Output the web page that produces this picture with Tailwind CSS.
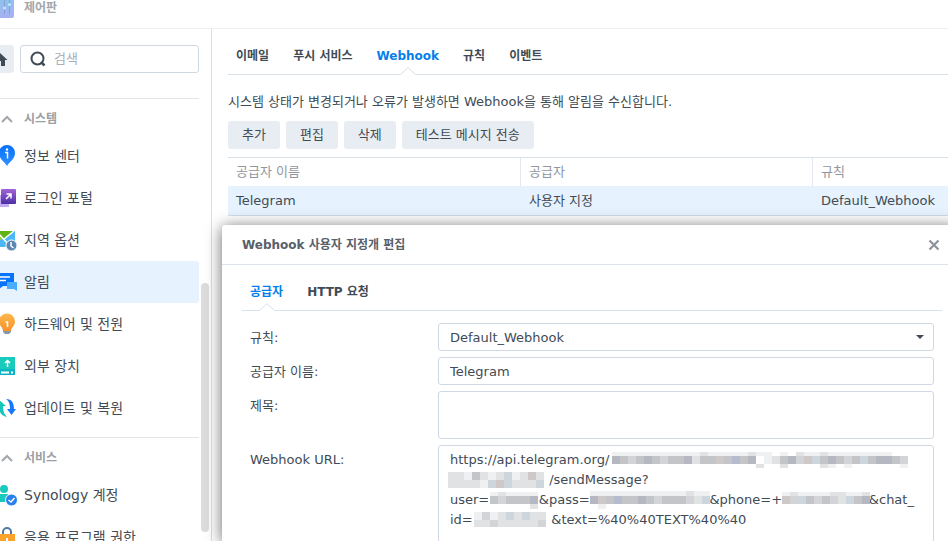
<!DOCTYPE html>
<html lang="ko">
<head>
<meta charset="utf-8">
<meta name="viewport" content="width=device-width, initial-scale=1">
<title>제어판</title>
<script src="https://cdn.jsdelivr.net/npm/@tailwindcss/browser@4"></script>
</head>
<body class="relative flex h-screen flex-col overflow-hidden bg-white font-['DejaVu_Sans','Noto_Sans_CJK_KR',sans-serif] text-[13px] leading-5 text-[#414b55]">
<header class="flex h-[29px] shrink-0 items-start border-b border-[#eceff3]">
  <svg class="h-[18px] w-6 shrink-0" viewBox="0 0 24 18" aria-hidden="true">
    <defs>
      <linearGradient id="panel" x1="0" y1="0" x2="0" y2="1"><stop offset="0" stop-color="#84c8ee"/><stop offset="1" stop-color="#a9b0f2"/></linearGradient>
      <linearGradient id="blue" x1="0" y1="0" x2="0" y2="1"><stop offset="0" stop-color="#0670f8"/><stop offset="1" stop-color="#2f92ff"/></linearGradient>
      <linearGradient id="purple" x1="0" y1="0" x2="0" y2="1"><stop offset="0" stop-color="#a163d6"/><stop offset="1" stop-color="#4b2fa5"/></linearGradient>
      <linearGradient id="orange" x1="0" y1="0" x2="0" y2="1"><stop offset="0" stop-color="#fdb84c"/><stop offset="1" stop-color="#f7912a"/></linearGradient>
    </defs>
    <path d="M-4 -6H14V16a2 2 0 0 1-2 2H-4Z" fill="url(#panel)"/>
    <path d="M4.500 0V14M9.500 0V14" stroke="#7fa2cf" stroke-width="1"/>
    <circle cx="4.500" cy="8" r="1.500" fill="#c3e6fb"/><circle cx="9.500" cy="4.500" r="1.500" fill="#c3e6fb"/>
  </svg>
  <h1 class="text-xs leading-4 font-bold text-[#a3a7ac]">제어판</h1>
</header>

<div class="flex min-h-0 flex-1">
  <aside class="relative flex w-[212px] shrink-0 flex-col overflow-hidden border-r border-[#d8dfe6] pt-4 pr-3">
    <div class="flex gap-1.5">
      <button aria-label="홈" class="h-7 w-3.5 shrink-0 rounded-r-[3px] bg-[#e8edf3]">
        <svg class="h-7 w-3.5" viewBox="0 0 14 28" aria-hidden="true"><path d="M-1 7L7.500 15H5V21H1V16H-1Z" fill="#414b55"/></svg>
      </button>
      <label class="flex h-7 flex-1 items-center gap-2 rounded-[3px] border border-[#d0d9e3] pl-[9px]">
        <svg class="size-4 shrink-0" viewBox="0 0 16 16" fill="none" stroke="#414b55" stroke-width="2" aria-hidden="true"><circle cx="7.500" cy="7.500" r="6"/><path d="M11 11L14.500 14.500" stroke-width="2.500"/></svg>
        <input type="search" placeholder="검색" aria-label="검색" class="w-full min-w-0 outline-none placeholder:text-[#a9b0b8]">
      </label>
    </div>

    <section class="mt-[25px] border-t border-[#e1e6eb]">
      <h2><button class="flex h-9 w-full items-center pt-1 text-xs font-bold text-[#9a9fa5]">
        <svg class="h-3 w-6" viewBox="0 0 24 12" fill="none" stroke="#a2a7ac" stroke-width="2" aria-hidden="true"><path d="M2 9L7 4L12 9"/></svg>시스템</button></h2>
      <nav class="text-sm">
        <a href="#" class="flex h-[42px] items-center">
          <svg class="h-6 w-6" viewBox="0 0 24 24" aria-hidden="true"><path d="M7 22C4 17-1 15-1 9a8 8 0 0 1 16 0C15 15 10 17 7 22Z" fill="url(#blue)"/><path d="M5 8.500H7.500V14.500" stroke="#fff" stroke-width="1.500" fill="none"/><circle cx="7" cy="5.500" r="1.200" fill="#fff"/></svg>정보 센터</a>
        <a href="#" class="flex h-[42px] items-center">
          <svg class="h-6 w-6" viewBox="0 0 24 24" aria-hidden="true"><path d="M-1 9H9V21H-1Z" fill="#c5aaf3"/><rect x="1" y="3" width="15" height="15" rx="1" fill="url(#purple)"/><path d="M6 13L10.500 8.500M6.500 8H11V12.500" stroke="#fff" stroke-width="1.500" fill="none"/></svg>로그인 포털</a>
        <a href="#" class="flex h-[42px] items-center">
          <svg class="h-6 w-6" viewBox="0 0 24 24" aria-hidden="true"><path d="M-1 3H15V19H-1Z" fill="#4db8f8"/><path d="M-1 3H13L4 11L-1 7Z" fill="#60b515"/><path d="M-1 13L3 10L-1 6" fill="#9bd52c"/><path d="M4 11L14 3M-1 6L9 17" stroke="#fff" stroke-width="1.600"/><circle cx="11.500" cy="17.500" r="5.500" fill="#5c87b2" stroke="#fff"/><path d="M11 14V18L13.500 20" fill="none" stroke="#fff" stroke-width="1.500"/></svg>지역 옵션</a>
        <a href="#" aria-current="page" class="flex h-[42px] items-center rounded-r-[3px] bg-[#e6f2fd]">
          <svg class="h-6 w-6" viewBox="0 0 24 24" aria-hidden="true"><path d="M-1 3H14V16H3L-1 19Z" fill="#0874fb"/><path d="M0 7H10M0 10.500H6" stroke="#fff" stroke-width="1.300"/><path d="M7 12H17V21L14 19H7Z" fill="#4aadff"/></svg>알림</a>
        <a href="#" class="flex h-[42px] items-center">
          <svg class="h-6 w-6" viewBox="0 0 24 24" aria-hidden="true"><path d="M3 18H11V20L9 22H5L3 20Z" fill="#8996a5"/><path d="M3 19C3 15-1 14-1 9.500a8 8 0 0 1 16 0C15 14 11 15 11 19Z" fill="url(#orange)"/><path d="M5.500 10H7.500V15" fill="none" stroke="#fff" stroke-width="1.500"/></svg>하드웨어 및 전원</a>
        <a href="#" class="flex h-[42px] items-center">
          <svg class="h-6 w-6" viewBox="0 0 24 24" aria-hidden="true"><path d="M-1 3H15V15H-1Z" fill="#19cbbd"/><path d="M-1 15H15V21H-1Z" fill="#0bb5c1"/><path d="M7.500 13V7M5 9L7.500 6.500L10 9" fill="none" stroke="#fff" stroke-width="1.500"/><path d="M1 18.500H9M11 18.500H13" stroke="#fff" stroke-width="2"/></svg>외부 장치</a>
        <a href="#" class="flex h-[42px] items-center">
          <svg class="h-6 w-6" viewBox="0 0 24 24" aria-hidden="true"><path d="M-1 4L6 10H3C3 15 4 18 7 21C1 20-1 16-1 10Z" fill="#16c6bc"/><path d="M6 3C12 3 14 7 14 13H16L11.500 19L7 13H10C10 8 9 5 6 3Z" fill="#1679fb"/></svg>업데이트 및 복원</a>
      </nav>
    </section>

    <section class="mt-2 border-t border-[#e1e6eb]">
      <h2><button class="flex h-9 w-full items-center pt-1 text-xs font-bold text-[#9a9fa5]">
        <svg class="h-3 w-6" viewBox="0 0 24 12" fill="none" stroke="#a2a7ac" stroke-width="2" aria-hidden="true"><path d="M2 9L7 4L12 9"/></svg>서비스</button></h2>
      <nav class="text-sm">
        <a href="#" class="flex h-[42px] items-center">
          <svg class="h-6 w-6" viewBox="0 0 24 24" aria-hidden="true"><circle cx="4" cy="6" r="4" fill="#18c9bd"/><path d="M-1 11H8V19H-1Z" fill="#18c9bd"/><circle cx="11.500" cy="17" r="6" fill="#2881ee" stroke="#fff"/><path d="M8.500 17L11 19L14.500 15" fill="none" stroke="#fff" stroke-width="1.500"/></svg>Synology 계정</a>
        <a href="#" class="flex h-[42px] items-center">
          <svg class="h-6 w-6" viewBox="0 0 24 24" aria-hidden="true"><path d="M3 11V7a4 4 0 0 1 8 0V11" fill="none" stroke="#56789f" stroke-width="2"/><path d="M-1 9H15V22H-1Z" fill="#fba22d"/><path d="M7 13V18" stroke="#fff" stroke-width="2"/></svg>응용 프로그램 권한</a>
      </nav>
    </section>
    <div class="absolute top-[254px] right-0.5 h-[249px] w-2 rounded-full bg-[#dcdcdc]"></div>
  </aside>

  <main class="min-w-0 flex-1 pl-4">
    <nav class="flex h-[46px] gap-6 border-b border-[#d8e0e8] px-2 pt-[17px] text-xs leading-5 font-bold">
      <a href="#">이메일</a>
      <a href="#">푸시 서비스</a>
      <a href="#" aria-current="page" class="relative text-[#057feb]">Webhook<svg class="absolute -bottom-px left-1/2 h-2 w-4 -translate-x-1/2" viewBox="0 0 16 8" aria-hidden="true"><path d="M0 8L1 7L8 .7L15 7L16 8Z" fill="#fff"/><path d="M.5 7.500L8 .7L15.500 7.500" fill="none" stroke="#d8e0e8"/></svg></a>
      <a href="#">규칙</a>
      <a href="#">이벤트</a>
    </nav>
    <p class="mt-[17px]">시스템 상태가 변경되거나 오류가 발생하면 Webhook을 통해 알림을 수신합니다.</p>
    <div class="mt-[9px] flex gap-1.5">
      <button class="h-7 rounded-[3px] bg-[#e8edf3] px-3.5">추가</button>
      <button class="h-7 rounded-[3px] bg-[#e8edf3] px-3.5">편집</button>
      <button class="h-7 rounded-[3px] bg-[#e8edf3] px-3.5">삭제</button>
      <button class="h-7 rounded-[3px] bg-[#e8edf3] px-3.5">테스트 메시지 전송</button>
    </div>
    <table class="mt-2 w-full table-fixed border-separate border-spacing-0 border-t border-[#d8e0e8] text-left">
      <colgroup><col class="w-[293px]"><col class="w-[292px]"><col></colgroup>
      <thead><tr class="h-7 text-[#91979d]">
        <th class="border-r border-[#e1e7ed] px-2 font-normal">공급자 이름</th>
        <th class="border-r border-[#e1e7ed] px-2 font-normal">공급자</th>
        <th class="px-2 font-normal">규칙</th>
      </tr></thead>
      <tbody><tr class="h-[30px] bg-[#e6f2fd]">
        <td class="border-b border-[#d0dce8] px-2 pt-px">Telegram</td>
        <td class="border-b border-[#d0dce8] px-2 pt-px">사용자 지정</td>
        <td class="border-b border-[#d0dce8] px-2 pt-px">Default_Webhook</td>
      </tr></tbody>
    </table>
  </main>
</div>

<div role="dialog" aria-labelledby="dlg" class="absolute top-[225px] -right-2 bottom-0 left-[222px] rounded-tl-[3px] bg-white shadow-[0_2px_16px_rgba(0,0,0,0.6)]">
  <div class="flex h-10 items-center justify-between border-b border-[#dce3ea] pr-4 pl-5">
    <h2 id="dlg" class="text-xs font-bold text-[#586069]">Webhook 사용자 지정개 편집</h2>
    <button aria-label="닫기" class="size-3"><svg viewBox="0 0 12 12" class="size-3" fill="none" stroke="#8f959b" stroke-width="2.300" aria-hidden="true"><path d="M1.500 1.500L10.500 10.500M10.500 1.500L1.500 10.500"/></svg></button>
  </div>
  <nav class="mr-3.5 ml-5 flex h-[46px] gap-6 border-b border-[#d8e0e8] px-2 pt-[17px] text-xs leading-5 font-bold">
    <a href="#" aria-current="page" class="relative text-[#057feb]">공급자<svg class="absolute -bottom-px left-1/2 h-2 w-4 -translate-x-1/2" viewBox="0 0 16 8" aria-hidden="true"><path d="M0 8L1 7L8 .7L15 7L16 8Z" fill="#fff"/><path d="M.5 7.500L8 .7L15.500 7.500" fill="none" stroke="#d8e0e8"/></svg></a>
    <a href="#">HTTP 요청</a>
  </nav>
  <form class="grid grid-cols-[188px_1fr] gap-y-1.5 pt-3 pr-[22px] pl-7">
    <label for="rule" class="pt-[5px]">규칙:</label>
    <div class="relative">
      <select id="rule" class="block h-7 w-full appearance-none rounded-[3px] border border-[#d0d9e3] bg-white px-[11px] pt-px"><option>Default_Webhook</option></select>
      <svg class="pointer-events-none absolute top-3 right-2.5 h-1 w-2" viewBox="0 0 8 4" aria-hidden="true"><path d="M0 0H8L4 4Z" fill="#414b55"/></svg>
    </div>
    <label for="name" class="pt-[5px]">공급자 이름:</label>
    <input id="name" value="Telegram" class="h-7 w-full rounded-[3px] border border-[#d0d9e3] px-[11px]">
    <label for="subject" class="pt-[5px]">제목:</label>
    <textarea id="subject" class="block h-12 w-full resize-none rounded-[3px] border border-[#d0d9e3] px-[11px] py-1"></textarea>
    <label for="url" class="pt-[5px]">Webhook URL:</label>
    <div class="relative">
      <textarea id="url" class="block h-28 w-full resize-none overflow-hidden rounded-[3px] border border-[#d0d9e3] px-[11px] py-1 whitespace-pre">https://api.telegram.org/
&nbsp;&nbsp;&nbsp;&nbsp;&nbsp;&nbsp;&nbsp;&nbsp;&nbsp;&nbsp;&nbsp;&nbsp;&nbsp;&nbsp;&nbsp;&nbsp;&nbsp;&nbsp;&nbsp;&nbsp;&nbsp;&nbsp;&nbsp;&nbsp;/sendMessage?
user=&nbsp;&nbsp;&nbsp;&nbsp;&nbsp;&nbsp;&nbsp;&nbsp;&nbsp;&nbsp;&nbsp;&nbsp;&amp;pass=&nbsp;&nbsp;&nbsp;&nbsp;&nbsp;&nbsp;&nbsp;&nbsp;&nbsp;&nbsp;&nbsp;&nbsp;&nbsp;&nbsp;&nbsp;&nbsp;&nbsp;&nbsp;&nbsp;&nbsp;&nbsp;&nbsp;&nbsp;&nbsp;&nbsp;&nbsp;&nbsp;&nbsp;&nbsp;&amp;phone=+&nbsp;&nbsp;&nbsp;&nbsp;&nbsp;&nbsp;&nbsp;&nbsp;&nbsp;&nbsp;&nbsp;&nbsp;&nbsp;&nbsp;&nbsp;&nbsp;&nbsp;&nbsp;&nbsp;&nbsp;&nbsp;&amp;chat_
id=&nbsp;&nbsp;&nbsp;&nbsp;&nbsp;&nbsp;&nbsp;&nbsp;&nbsp;&nbsp;&nbsp;&nbsp;&nbsp;&nbsp;&nbsp;&nbsp;&nbsp;&nbsp;&nbsp;&amp;text=%40%40TEXT%40%40</textarea>
      <svg id="mask" class="pointer-events-none absolute top-0 left-0 h-[96px] w-[496px]" viewBox="0 0 496 96" shape-rendering="crispEdges" aria-hidden="true"></svg>
    </div>
  </form>
</div>
<script>
// Censor mosaic over the secret parts of the URL: [x, y, height, one tone letter per 8px cell]
const tones = {a:'#c3c5c9', b:'#b5b8c1', c:'#d2d4d7', d:'#e0e2e4', e:'#cdd5dd', f:'#cfc8c9', g:'#eff0f2', h:'#b6bccd'};
const rows = [
  [174, 7, 4, 'gggggggggggdgggggdgg.g.dggdgggggggg'],
  [174, 11, 8, 'bacabacaabdaafahab.gdabcfeabacaeabbac'],
  [318, 19, 4, 'd..d....dg.g......g'],
  [10, 27, 8, 'ddgadgdegdfd'],
  [10, 35, 8, 'ddddgefeddde'],
  [92, 59, 5, 'd'],
  [52, 47, 4, 'gdgggg'],
  [52, 51, 8, 'acaaab'],
  [152, 46, 5, 'ggggggggggggdgg'],
  [152, 51, 8, 'bfahaabacaaacde'],
  [160, 59, 5, 'g'],
  [344, 47, 4, 'gdggggddggd'],
  [344, 51, 8, 'fceacacdeab'],
  [36, 67, 8, 'gcgdededd'],
  [36, 75, 7, 'ddcdddddc']
];
const mask = document.getElementById('mask');
for (const [x, y, h, cells] of rows) {
  [...cells].forEach((c, i) => {
    if (c === '.') return;
    const r = document.createElementNS('http://www.w3.org/2000/svg', 'rect');
    r.setAttribute('x', x + i * 8);
    r.setAttribute('y', y);
    r.setAttribute('width', 8);
    r.setAttribute('height', h);
    r.setAttribute('fill', tones[c]);
    mask.append(r);
  });
}
</script>
</body>
</html>
